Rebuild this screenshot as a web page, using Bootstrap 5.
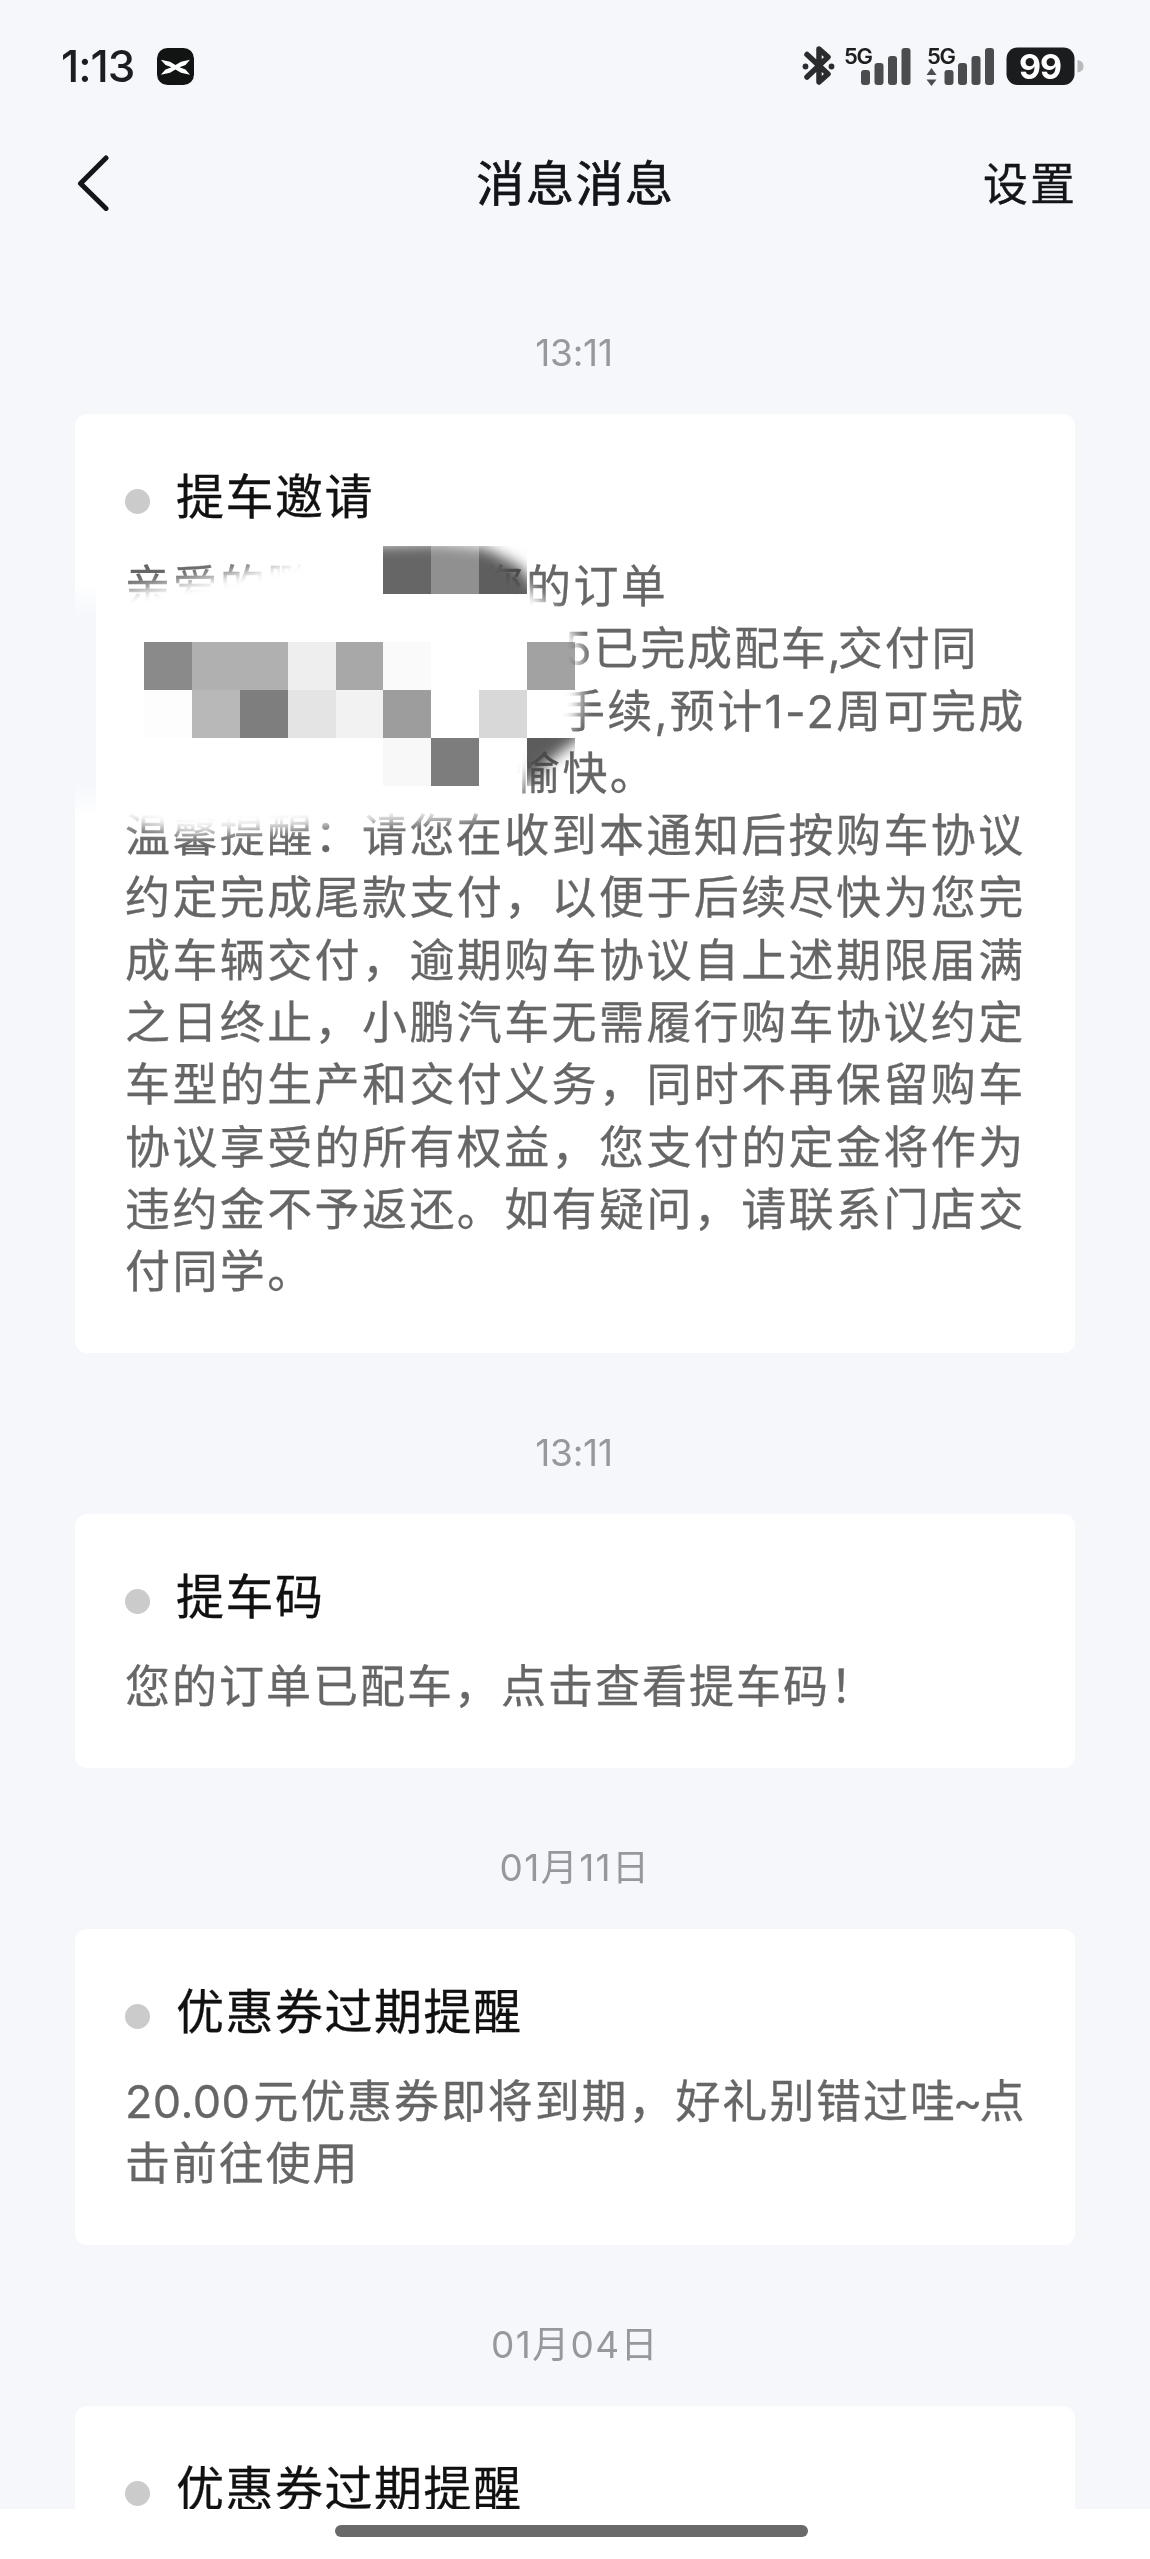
<!DOCTYPE html>
<html lang="zh-CN">
<head>
<meta charset="utf-8">
<meta name="viewport" content="width=device-width, initial-scale=1">
<title>消息</title>
<link href="https://cdn.jsdelivr.net/npm/bootstrap@5.3.0/dist/css/bootstrap.min.css" rel="stylesheet">
<style>
  body { background: #f5f7fb; color: #141518; font-family: Inter, "Noto Sans CJK SC", sans-serif; }
  .screen { width: 1150px; height: 2559px; }
  .statusbar { height: 130px; padding: 2px 66px 0 61px; }
  .statusbar svg { overflow: visible; }
  .clock { font-size: 44px; font-weight: 500; letter-spacing: -1px; line-height: 1; color: #1c1d20; }
  .appicon { margin-left: 23px; }
  .appbar { height: 106px; padding: 0 76px 0 77px; }
  .appbar-side { flex: 1 1 0; }
  .appbar-title { font-size: 48px; letter-spacing: 1.6px; line-height: 1; padding-top: 2px; -webkit-text-stroke: .7px #141518; }
  .appbar-link { font-size: 45px; letter-spacing: 2px; line-height: 1; margin-right: -3px; padding-top: 2px; -webkit-text-stroke: .3px #141518; }
  .feed { padding: 17px 75px 0; }
  .stamp { height: 161px; padding: 38px 2px 0 0; font-size: 37px; color: #97989c; letter-spacing: -.2px; }
  .stamp-date { letter-spacing: 1.4px; padding-right: 0; }
  .msg { background: #fff; border-radius: 12px; padding: 49px 50px 49.5px; }
  .msg-title { font-size: 48px; line-height: 68px; letter-spacing: 1.5px; margin-bottom: 25px; gap: 26px; color: #111; -webkit-text-stroke: .3px #111; }
  .unread { width: 25px; height: 25px; margin-top: 9px; background: #cbcbcb; }
  .msg-text { font-size: 45px; letter-spacing: 2.4px; color: #666; white-space: nowrap; -webkit-text-stroke: .3px #666; }
  .msg-text > div { height: 62.3px; line-height: 61.3px; }
  .l1 { margin-left: 164px; }
  .l2 { margin-left: 439px; letter-spacing: 1.9px; }
  .l2 span { letter-spacing: -3px; }
  .l3 { margin-left: 435px; letter-spacing: 2.3px; }
  .l4 { margin-left: 390px; }
  .text-tight { letter-spacing: 2px; }
  .text-coupon { letter-spacing: 1.9px; }
  .amount { letter-spacing: .4px; margin-right: 3px; }
  .wave { letter-spacing: -3px; margin-left: -4px; }
  .mosaic { left: -35px; top: 106px; }
  .mosaic .cells { mix-blend-mode: multiply; }
  .navarea { height: 50px; background: #fff; }
  .homebar { width: 473px; height: 12px; margin-top: 16px; margin-left: 335px; background: #696969; }
</style>
</head>
<body>
<div class="screen d-flex flex-column overflow-hidden">
  <div class="statusbar d-flex align-items-center justify-content-between flex-shrink-0">
    <div class="d-flex align-items-center">
      <span class="clock">1:13</span>
      <svg class="appicon" width="37" height="37" viewBox="0 0 37 37"><rect width="37" height="37" rx="10.500" fill="#111413"/><path fill="#fff" d="M3.800 11.800 13 13.800 18.500 17 24 13.800 33 11.800 28.500 17 22.500 19.300 28.500 21.500 33 26.800 24 24.800 18.500 21.500 13 24.800 3.800 26.800 8.500 21.500 14.500 19.300 8.500 17z"/></svg>
    </div>
    <svg width="282" height="44" viewBox="0 0 282 44">
      <path fill="none" stroke="#2b2c2e" stroke-width="5.500" stroke-linejoin="round" stroke-linecap="round" d="M5 10.500 26 30 17 38V5L26 13 5 33"/>
      <circle cx="3.500" cy="22.500" r="2.900" fill="#2b2c2e"/><circle cx="29.500" cy="22.500" r="2.900" fill="#2b2c2e"/>
      <g font-family="Inter, sans-serif" font-weight="600" font-size="22" fill="#1d1e20"><text x="42" y="19.500" textLength="29">5G</text><text x="125" y="19.500" textLength="29">5G</text></g>
      <g fill="#4b4c4d"><rect x="59" y="26" width="9" height="15" rx="3"/><rect x="72.500" y="19" width="9" height="22" rx="3"/><rect x="86" y="12" width="9" height="29" rx="3"/><rect x="99.500" y="4" width="9" height="37" rx="3"/>
      <rect x="142.500" y="26" width="9" height="15" rx="3"/><rect x="156" y="19" width="9" height="22" rx="3"/><rect x="169.500" y="12" width="9" height="29" rx="3"/><rect x="183" y="4" width="9" height="37" rx="3"/>
      <path d="M129.500 24 134.500 31H124.500zM129.500 42 134.500 35.500H124.500z"/></g>
      <rect x="204.500" y="3.500" width="68" height="37.500" rx="11" fill="#1b1c1e"/>
      <text x="238.500" y="34.500" text-anchor="middle" font-family="Inter, sans-serif" font-weight="700" font-size="34" textLength="43" fill="#fff">99</text>
      <path d="M275.500 16Q281.500 17 281.500 22.300T275.500 28.500z" fill="#b9babc"/>
    </svg>
  </div>

  <header class="appbar d-flex align-items-center flex-shrink-0">
    <div class="appbar-side d-flex"><svg width="33" height="56" viewBox="0 0 33 56" fill="none" stroke="#141518" stroke-width="5" stroke-linecap="round" stroke-linejoin="round"><path d="M29 3 3.500 28.500 29 53.500"/></svg></div>
    <div class="appbar-title">消息消息</div>
    <div class="appbar-side d-flex justify-content-end"><div class="appbar-link">设置</div></div>
  </header>

  <main class="feed flex-grow-1 overflow-hidden">
    <div class="stamp d-flex align-items-center justify-content-center">13:11</div>
    <section class="msg position-relative">
      <div class="msg-title d-flex align-items-center"><i class="unread rounded-circle"></i>提车邀请</div>
      <div class="msg-text">
        <div class="d-flex"><span>亲爱的鹏</span><span class="l1">您的订单</span></div>
        <div class="l2">5已完成配车<span>,</span>交付同</div>
        <div class="l3">手续,预计1-2周可完成</div>
        <div class="l4">愉快。</div>
        <div>温馨提醒：请您在收到本通知后按购车协议</div>
        <div>约定完成尾款支付，以便于后续尽快为您完</div>
        <div>成车辆交付，逾期购车协议自上述期限届满</div>
        <div>之日终止，小鹏汽车无需履行购车协议约定</div>
        <div>车型的生产和交付义务，同时不再保留购车</div>
        <div>协议享受的所有权益，您支付的定金将作为</div>
        <div>违约金不予返还。如有疑问，请联系门店交</div>
        <div>付同学。</div>
      </div>
      <!-- Redaction brush: soft white smear with mosaic cells -->
      <svg class="mosaic position-absolute" width="600" height="330" viewBox="40 520 600 330">
        <defs>
          <filter id="soft" x="-20%" y="-20%" width="140%" height="140%"><feGaussianBlur stdDeviation="7"/></filter>
          <linearGradient id="edge" x1="0" y1="0" x2="0" y2="1"><stop offset="0" stop-color="#f5f7fb" stop-opacity="0"/><stop offset=".14" stop-color="#f5f7fb"/><stop offset=".86" stop-color="#f5f7fb"/><stop offset="1" stop-color="#f5f7fb" stop-opacity="0"/></linearGradient>
          <mask id="brush" maskUnits="userSpaceOnUse" x="40" y="520" width="600" height="330"><path filter="url(#soft)" fill="#fff" d="M60 560 370 545 440 543 485 548 520 566 545 600 600 640 600 700 580 738 556 756 530 782 500 810 60 830z"/></mask>
        </defs>
        <rect x="74" y="584" width="22" height="232" fill="url(#edge)"/>
        <path filter="url(#soft)" fill="#fff" d="M105 594 180 582 250 569 310 553 370 540 478 540 520 580 556 612 580 640 580 715 556 742 532 768 515 802 470 818 330 824 290 828 190 834 105 820z"/>
        <g class="cells" shape-rendering="crispEdges">
          <g mask="url(#brush)">
            <rect x="383" y="546" width="48" height="48" fill="#666"/><rect x="431" y="546" width="48" height="48" fill="#909090"/><rect x="479" y="546" width="48" height="48" fill="#5e5e5e"/>
            <rect x="527" y="738" width="48" height="48" fill="#5c5c5c"/>
          </g>
          <rect x="144" y="642" width="48" height="48" fill="#8a8a8a"/><rect x="192" y="642" width="96" height="48" fill="#b0b0b0"/><rect x="288" y="642" width="48" height="48" fill="#eee"/><rect x="336" y="642" width="47" height="48" fill="#a8a8a8"/><rect x="383" y="642" width="48" height="48" fill="#fafafa"/><rect x="527" y="642" width="48" height="48" fill="#a2a2a2"/>
          <rect x="144" y="690" width="48" height="48" fill="#fdfdfd"/><rect x="192" y="690" width="48" height="48" fill="#b8b8b8"/><rect x="240" y="690" width="48" height="48" fill="#7e7e7e"/><rect x="288" y="690" width="48" height="48" fill="#e4e4e4"/><rect x="336" y="690" width="47" height="48" fill="#f2f2f2"/><rect x="383" y="690" width="48" height="48" fill="#9d9d9d"/><rect x="479" y="690" width="48" height="48" fill="#d8d8d8"/>
          <rect x="383" y="738" width="48" height="48" fill="#f8f8f8"/><rect x="431" y="738" width="48" height="48" fill="#7d7d7d"/>
        </g>
      </svg>
    </section>
    <div class="stamp d-flex align-items-center justify-content-center">13:11</div>
    <section class="msg">
      <div class="msg-title d-flex align-items-center"><i class="unread rounded-circle"></i>提车码</div>
      <div class="msg-text"><div class="text-tight">您的订单已配车，点击查看提车码！</div></div>
    </section>
    <div class="stamp stamp-date d-flex align-items-center justify-content-center">01月11日</div>
    <section class="msg">
      <div class="msg-title d-flex align-items-center"><i class="unread rounded-circle"></i>优惠券过期提醒</div>
      <div class="msg-text"><div class="text-coupon"><span class="amount">20.00</span>元优惠券即将到期，好礼别错过哇<span class="wave">~</span>点</div><div class="text-coupon">击前往使用</div></div>
    </section>
    <div class="stamp stamp-date d-flex align-items-center justify-content-center">01月04日</div>
    <section class="msg">
      <div class="msg-title d-flex align-items-center"><i class="unread rounded-circle"></i>优惠券过期提醒</div>
    </section>
  </main>
  <footer class="navarea flex-shrink-0 overflow-hidden"><div class="homebar rounded-pill"></div></footer>
</div>
<script src="https://cdn.jsdelivr.net/npm/bootstrap@5.3.0/dist/js/bootstrap.bundle.min.js"></script>
</body>
</html>
